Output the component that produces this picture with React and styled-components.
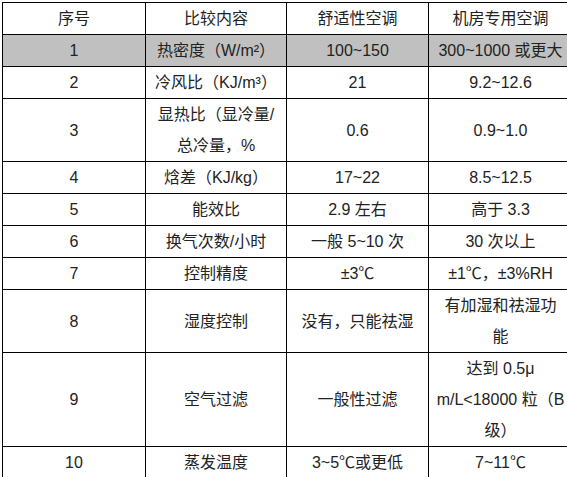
import React from 'react';
import styled, { createGlobalStyle } from 'styled-components';

const Global = createGlobalStyle`
    html, body {
        margin: 0;
        padding: 0;
        background: #fff;
        overflow: hidden;
    }
`;

const Page = styled.div`
    width: 567px;
    height: 477px;
    overflow: hidden;
    padding: 2px 0 0 2px;
    box-sizing: border-box;
`;

const Table = styled.table`
    width: 570px;
    table-layout: fixed;
    border-collapse: collapse;
    font-family: "Liberation Sans", "Noto Sans CJK SC", sans-serif;
    font-size: 16px;
    color: #222;
`;

const Cell = styled.td`
    border: 1px solid #000;
    padding: 0 4px;
    height: ${p => p.lines * 31}px;
    line-height: 31px;
    text-align: center;
    vertical-align: middle;
    white-space: nowrap;
    overflow: hidden;
    background: ${p => (p.shade ? '#c0c0c0' : '#fff')};
`;

const Line = styled.div`
    line-height: 31px;
`;

const rows = [
    ['序号', '比较内容', '舒适性空调', '机房专用空调'],
    ['1', '热密度（W/m²）', '100~150', '300~1000 或更大'],
    ['2', '冷风比（KJ/m³）', '21', '9.2~12.6'],
    ['3', ['显热比（显冷量/', '总冷量，%'], '0.6', '0.9~1.0'],
    ['4', '焓差（KJ/kg）', '17~22', '8.5~12.5'],
    ['5', '能效比', '2.9 左右', '高于 3.3'],
    ['6', '换气次数/小时', '一般 5~10 次', '30 次以上'],
    ['7', '控制精度', '±3℃', '±1℃，±3%RH'],
    ['8', '湿度控制', '没有，只能祛湿', ['有加湿和祛湿功', '能']],
    ['9', '空气过滤', '一般性过滤', ['达到 0.5μ', 'm/L<18000 粒（B', '级）']],
    ['10', '蒸发温度', '3~5℃或更低', '7~11℃'],
];

const widths = [143, 141, 142, 144];

const App = () => {
    return (
        <Page>
            <Global />
            <Table>
                <colgroup>
                    {widths.map((w, i) => <col key={i} style={{ width: w }} />)}
                </colgroup>
                <tbody>
                    {rows.map((row, r) => {
                        const lines = Math.max(...row.map(c => (Array.isArray(c) ? c.length : 1)));
                        return (
                            <tr key={r}>
                                {row.map((c, i) => (
                                    <Cell key={i} lines={lines} shade={r === 1}>
                                        {Array.isArray(c) ? c.map((t, k) => <Line key={k}>{t}</Line>) : c}
                                    </Cell>
                                ))}
                            </tr>
                        );
                    })}
                </tbody>
            </Table>
        </Page>
    );
};

export default App;
